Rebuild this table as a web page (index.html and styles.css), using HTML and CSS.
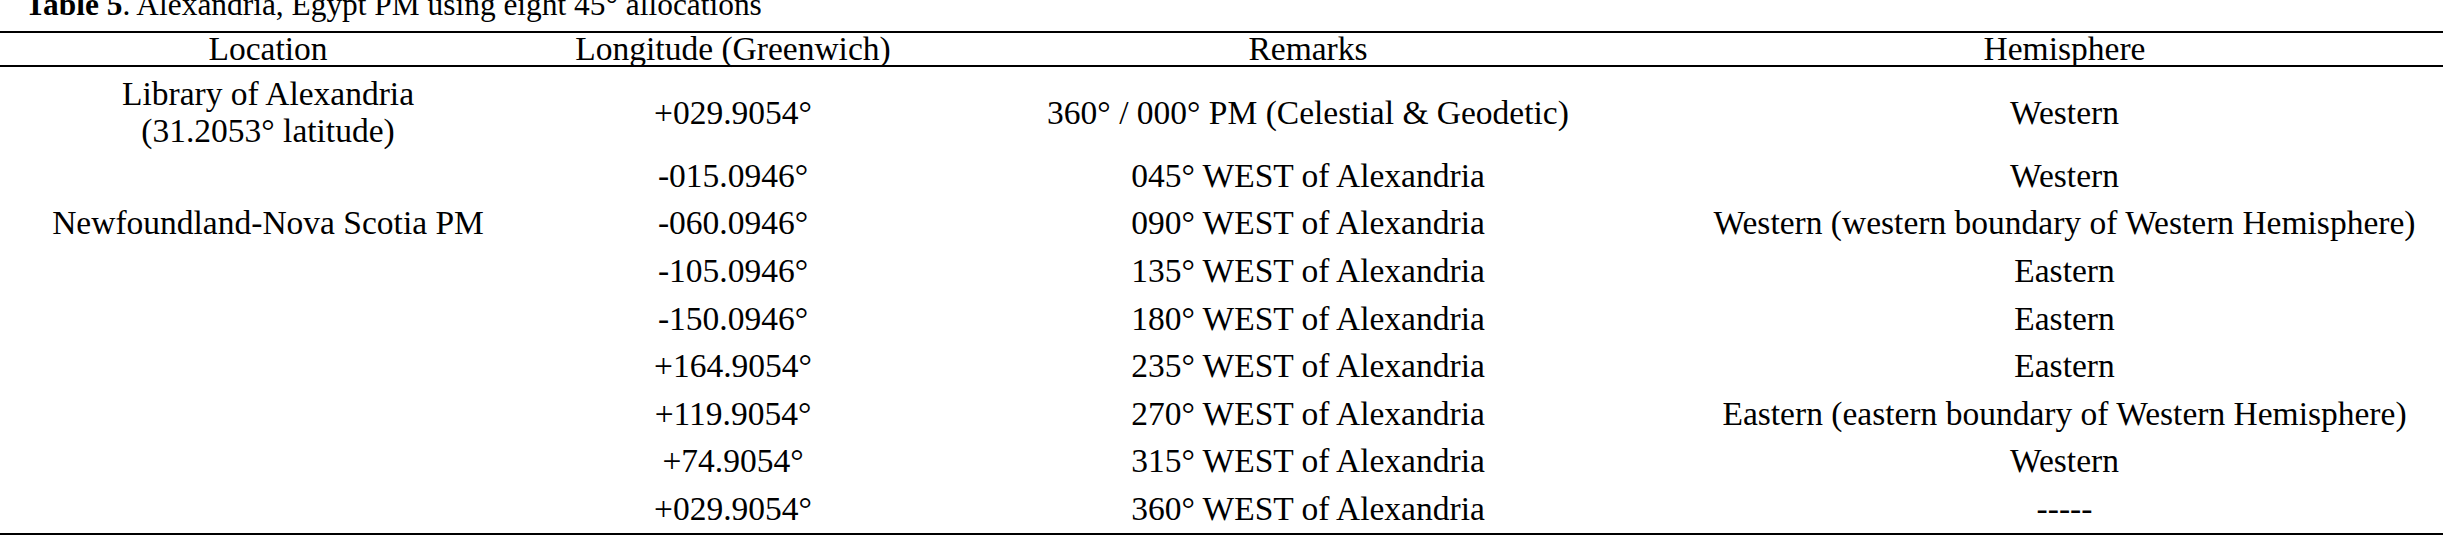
FILE: index.html
```html
<!DOCTYPE html>
<html lang="en">
<head>
<meta charset="utf-8">
<title>Table 5</title>
<link rel="stylesheet" href="styles.css">
</head>
<body>
<div class="page">
  <div class="caption"><b>Table 5</b>. Alexandria, Egypt PM using eight 45° allocations</div>
  <table class="data">
    <colgroup>
      <col class="c-loc">
      <col class="c-lon">
      <col class="c-rem">
      <col class="c-hem">
    </colgroup>
    <thead>
      <tr>
        <th>Location</th>
        <th>Longitude (Greenwich)</th>
        <th>Remarks</th>
        <th>Hemisphere</th>
      </tr>
    </thead>
    <tbody>
      <tr class="first">
        <td>Library of Alexandria<br>(31.2053° latitude)</td>
        <td>+029.9054°</td>
        <td>360° / 000° PM (Celestial &amp; Geodetic)</td>
        <td>Western</td>
      </tr>
      <tr>
        <td></td>
        <td>-015.0946°</td>
        <td>045° WEST of Alexandria</td>
        <td>Western</td>
      </tr>
      <tr>
        <td>Newfoundland-Nova Scotia PM</td>
        <td>-060.0946°</td>
        <td>090° WEST of Alexandria</td>
        <td>Western (western boundary of Western Hemisphere)</td>
      </tr>
      <tr>
        <td></td>
        <td>-105.0946°</td>
        <td>135° WEST of Alexandria</td>
        <td>Eastern</td>
      </tr>
      <tr>
        <td></td>
        <td>-150.0946°</td>
        <td>180° WEST of Alexandria</td>
        <td>Eastern</td>
      </tr>
      <tr>
        <td></td>
        <td>+164.9054°</td>
        <td>235° WEST of Alexandria</td>
        <td>Eastern</td>
      </tr>
      <tr>
        <td></td>
        <td>+119.9054°</td>
        <td>270° WEST of Alexandria</td>
        <td>Eastern (eastern boundary of Western Hemisphere)</td>
      </tr>
      <tr>
        <td></td>
        <td>+74.9054°</td>
        <td>315° WEST of Alexandria</td>
        <td>Western</td>
      </tr>
      <tr class="last">
        <td></td>
        <td>+029.9054°</td>
        <td>360° WEST of Alexandria</td>
        <td>-----</td>
      </tr>
    </tbody>
  </table>
</div>
</body>
</html>
```

FILE: styles.css
```css
html, body {
  margin: 0;
  padding: 0;
  background: #ffffff;
}

body {
  font-family: "Liberation Serif", "Times New Roman", serif;
  font-size: 33.5px;
  color: #000000;
  overflow: hidden;
}

.page {
  width: 2443px;
}

.caption {
  font-size: 31.4px;
  line-height: 33px;
  margin-top: -12px;
  padding-left: 25px;
  height: 43px;
  white-space: nowrap;
}

.caption b {
  font-weight: bold;
}

.data {
  width: 2443px;
  table-layout: fixed;
  border-collapse: separate;
  border-spacing: 0;
}

.c-loc { width: 536px; }
.c-lon { width: 394px; }
.c-rem { width: 756px; }
.c-hem { width: 757px; }

.data th,
.data td {
  font-weight: normal;
  text-align: center;
  vertical-align: middle;
  line-height: 40px;
  padding: 3.8px 0;
  white-space: nowrap;
}

.data th {
  border-top: 2px solid #000;
  border-bottom: 2px solid #000;
  line-height: 32px;
  padding: 0;
}

.data tr.first td {
  line-height: 37px;
  padding: 8px 0 3px;
}

.data tr.last td {
  border-bottom: 2px solid #000;
}
```
